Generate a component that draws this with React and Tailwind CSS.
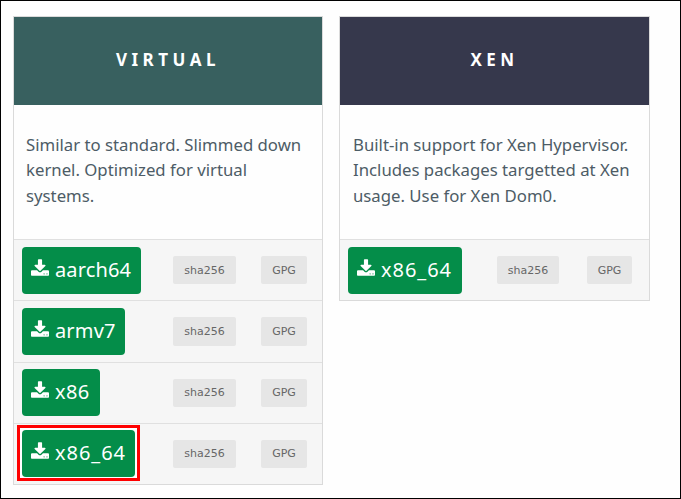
import clsx from 'clsx';

const cards = [
  {
    title: 'VIRTUAL',
    width: 'w-[310px]',
    header: 'bg-[#38605f]',
    padding: 'pl-3',
    lines: ['Similar to standard. Slimmed down', 'kernel. Optimized for virtual', 'systems.'],
    rows: [
      { arch: 'aarch64', button: 'w-[119px] tracking-[0.15px]', height: 'h-[61px] pt-[7px]', tag: 'mt-[9px] h-7 pt-0.5' },
      { arch: 'armv7', button: 'w-[103px] tracking-[0.15px]', height: 'h-[62px] pt-[7px]', tag: 'mt-[9px] h-[29px] pt-px' },
      { arch: 'x86', button: 'w-[78px] tracking-[0.4px]', height: 'h-[61px] pt-1.5', tag: 'mt-2.5 h-7' },
      {
        arch: 'x86_64',
        button: 'w-[113px] tracking-[0.95px]',
        height: 'h-[61px] pt-1.5',
        tag: 'mt-2.5 h-7',
        highlighted: true
      }
    ]
  },
  {
    title: 'XEN',
    width: 'w-[311px]',
    header: 'bg-[#36384c]',
    padding: 'pl-[13px]',
    lines: ['Built-in support for Xen Hypervisor.', 'Includes packages targetted at Xen', 'usage. Use for Xen Dom0.'],
    rows: [{ arch: 'x86_64', button: 'w-[114px] tracking-[0.95px]', height: 'h-[61px] pt-[7px]', tag: 'mt-[9px] h-7 pt-0.5' }]
  }
];

function DownloadIcon() {
  return (
    <svg viewBox="64 0 1664 1536" className="mb-1.5 h-[17px] w-[18px] shrink-0" fill="currentColor">
      <path d="M1344 1344q0-26-19-45t-45-19-45 19-19 45 19 45 45 19 45-19 19-45zm256 0q0-26-19-45t-45-19-45 19-19 45 19 45 45 19 45-19 19-45zm128-224v320q0 40-28 68t-68 28h-1472q-40 0-68-28t-28-68v-320q0-40 28-68t68-28h465l135 136q58 56 136 56t136-56l136-136h464q40 0 68 28t28 68zm-325-569q17 41-14 70l-448 448q-18 19-45 19t-45-19l-448-448q-31-29-14-70 17-39 59-39h256v-448q0-26 19-45t45-19h256q26 0 45 19t19 45v448h256q42 0 59 39z" />
      <path d="M1200 1270h410v150h-410z" opacity="0.5" />
    </svg>
  );
}

function Tag({ className, children }) {
  return (
    <a
      className={clsx(
        "flex shrink-0 items-center justify-center rounded-xs bg-[#e6e6e6] font-['DejaVu_Sans',sans-serif] text-[11px] text-[#666]",
        className
      )}
    >
      {children}
    </a>
  );
}

function DownloadRow({ row, xen }) {
  return (
    <div className={clsx('flex items-start border-t border-[#e0e0e0] bg-[#f6f6f6] pl-2', row.height)}>
      <div className={clsx('relative shrink-0', xen ? 'w-[149px]' : 'w-[151px]')}>
        {row.highlighted ? (
          <span className="absolute -top-[5px] -left-[5px] h-[56px] w-[123px] border-3 border-[#f00] bg-white" />
        ) : null}
        <button
          type="button"
          className={clsx(
            'relative flex h-[47px] items-center gap-1.5 rounded bg-[#048d49] pl-[9px] text-[20px] whitespace-nowrap text-white',
            row.button
          )}
        >
          <DownloadIcon />
          <span className="pb-0.5">{row.arch}</span>
        </button>
      </div>
      <Tag className={clsx(row.tag, xen ? 'w-[62px]' : 'w-[63px]')}>sha256</Tag>
      <Tag className={clsx(row.tag, xen ? 'ml-7 w-[45px]' : 'ml-[25px] w-[46px]')}>GPG</Tag>
    </div>
  );
}

function Card({ card }) {
  return (
    <section className={clsx('border border-[#dadada]', card.width)}>
      <h2
        className={clsx(
          'flex h-[88px] items-center justify-center pb-0.5 text-[17px] font-bold tracking-[4.5px] text-white',
          card.header
        )}
      >
        {card.title}
      </h2>
      <p className={clsx('h-[134px] pt-[26.5px] text-[16.75px] leading-[25.6px] whitespace-nowrap text-[#4d5c66]', card.padding)}>
        {card.lines.map((line) => (
          <span key={line} className="block">
            {line}
          </span>
        ))}
      </p>
      {card.rows.map((row) => (
        <DownloadRow key={row.arch} row={row} xen={card.title === 'XEN'} />
      ))}
    </section>
  );
}

export default function App() {
  return (
    <main className="flex h-[499px] w-[681px] items-start gap-4 overflow-hidden border border-black bg-[#fefefe] pt-[15px] pl-3 font-['Noto_Sans',sans-serif]">
      {cards.map((card) => (
        <Card key={card.title} card={card} />
      ))}
    </main>
  );
}
